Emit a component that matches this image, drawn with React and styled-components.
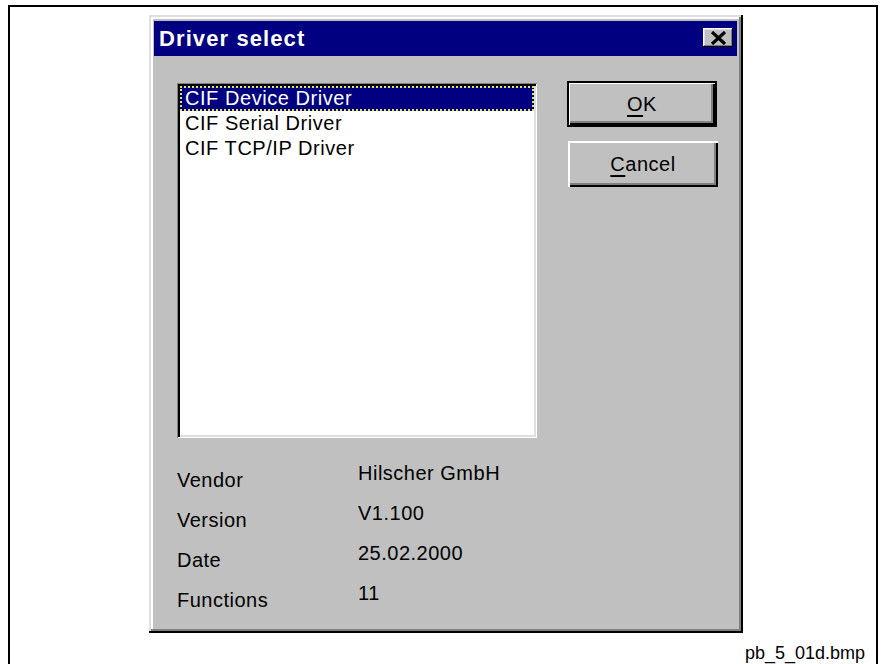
import React from 'react';
import styled, { createGlobalStyle } from 'styled-components';

const GlobalStyle = createGlobalStyle`
  html, body {
    margin: 0;
    padding: 0;
    background: #fff;
    overflow: hidden;
  }
  body {
    font-family: "Liberation Sans", Arial, sans-serif;
  }
`

const Frame = styled.div`
  box-sizing: border-box;
  margin: 5px 5px 0 8px;
  height: 659px;
  border: 2px solid #000;
  border-bottom: none;
  display: flex;
  flex-direction: column;
`

const Dialog = styled.div`
  box-sizing: border-box;
  width: 594px;
  height: 618px;
  margin: 8px 0 0 139px;
  padding: 6px 6px 6px 5px;
  background: #c0c0c0;
  box-shadow:
    inset -2px -2px #000,
    inset 2px 2px #dfdfdf,
    inset -4px -4px #808080,
    inset 4px 4px #fff;
  display: flex;
  flex-direction: column;
`

const TitleBar = styled.div`
  height: 35px;
  background: #000080;
  display: flex;
  align-items: center;
  justify-content: space-between;
  padding: 0 4px 0 5px;
`

const Title = styled.span`
  color: #fff;
  font-weight: bold;
  font-size: 22px;
  letter-spacing: 1.1px;
`

const CloseButton = styled.div`
  width: 30px;
  height: 19px;
  margin-top: -2px;
  background: #c0c0c0;
  box-shadow:
    inset -1px -1px #000,
    inset 1px 1px #fff,
    inset -2px -2px #808080,
    inset 2px 2px #dfdfdf;
  display: flex;
  align-items: center;
  justify-content: center;
`

const Body = styled.div`
  display: flex;
  padding: 25px 0 0 23px;
  gap: 30px;
`

const LeftColumn = styled.div`
  display: flex;
  flex-direction: column;
`

const ListBox = styled.div`
  box-sizing: border-box;
  width: 360px;
  height: 355px;
  margin-top: 2px;
  background: #fff;
  padding: 3px;
  box-shadow:
    inset 1px 1px #808080,
    inset -1px -1px #fff,
    inset 3px 3px #000,
    inset -3px -3px #dfdfdf;
`

const Item = styled.div`
  box-sizing: border-box;
  height: 25px;
  line-height: 25px;
  padding-left: 5px;
  font-size: 20px;
  letter-spacing: 0.55px;
  color: ${p => (p.selected ? '#fff' : '#000')};
  background: ${p => (p.selected ? '#000080' : 'transparent')};
  outline: ${p => (p.selected ? '2px dotted #e8e84a' : 'none')};
  outline-offset: -2px;
`

const InfoGrid = styled.div`
  display: grid;
  grid-template-columns: 181px auto;
  grid-auto-rows: 40px;
  margin-top: 24px;
  font-size: 20px;
  letter-spacing: 0.5px;
  color: #000;
`

const Label = styled.div`
  padding-top: 7px;
  line-height: 22px;
`

const Value = styled.div`
  line-height: 22px;
`

const RightColumn = styled.div`
  display: flex;
  flex-direction: column;
  gap: 14px;
`

const Button = styled.div`
  box-sizing: border-box;
  width: 150px;
  height: 46px;
  display: flex;
  align-items: center;
  justify-content: center;
  font-size: 20px;
  letter-spacing: 0.5px;
  color: #000;
  background: #c0c0c0;
  box-shadow: ${p =>
    p.primary
      ? 'inset 0 0 0 2px #000, inset 3px 3px #fff, inset -4px -4px #000, inset -6px -6px #808080'
      : 'inset 2px 2px #fff, inset -2px -2px #000, inset -4px -4px #808080'};
  margin-left: ${p => (p.primary ? '0' : '1px')};

  u {
    text-decoration-thickness: 2px;
    text-underline-offset: 4px;
  }
`

const Caption = styled.div`
  margin-top: 9px;
  padding-right: 11px;
  text-align: right;
  font-size: 18px;
  line-height: 22px;
  color: #000;
`

const drivers = ['CIF Device Driver', 'CIF Serial Driver', 'CIF TCP/IP Driver']

const info = [
  ['Vendor', 'Hilscher GmbH'],
  ['Version', 'V1.100'],
  ['Date', '25.02.2000'],
  ['Functions', '11'],
]

const CloseIcon = () => (
  <svg width="17" height="14" viewBox="0 0 17 14">
    <path d="M2 1 L15 13 M15 1 L2 13" stroke="#000" strokeWidth="3.2" />
  </svg>
)

function App() {
  return (
    <>
      <GlobalStyle />
      <Frame>
        <Dialog>
          <TitleBar>
            <Title>Driver select</Title>
            <CloseButton>
              <CloseIcon />
            </CloseButton>
          </TitleBar>
          <Body>
            <LeftColumn>
              <ListBox>
                {drivers.map((d, i) => (
                  <Item key={d} selected={i === 0}>
                    {d}
                  </Item>
                ))}
              </ListBox>
              <InfoGrid>
                {info.map(([k, v]) => (
                  <React.Fragment key={k}>
                    <Label>{k}</Label>
                    <Value>{v}</Value>
                  </React.Fragment>
                ))}
              </InfoGrid>
            </LeftColumn>
            <RightColumn>
              <Button primary>
                <u>O</u>K
              </Button>
              <Button>
                <u>C</u>ancel
              </Button>
            </RightColumn>
          </Body>
        </Dialog>
        <Caption>pb_5_01d.bmp</Caption>
      </Frame>
    </>
  )
}

export default App
